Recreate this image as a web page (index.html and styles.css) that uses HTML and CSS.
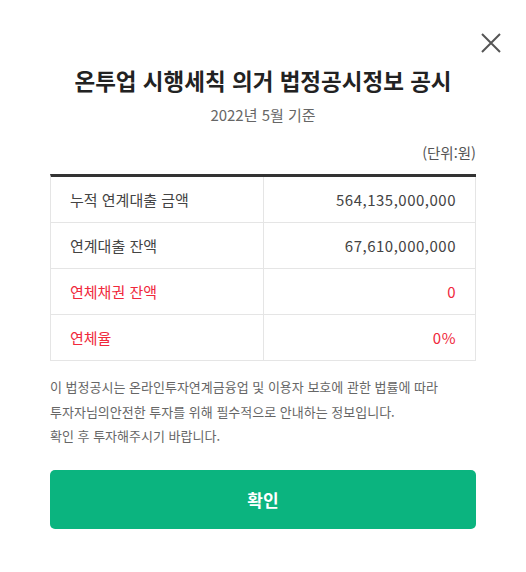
FILE: index.html
```html
<!DOCTYPE html>
<html lang="ko">
<head>
<meta charset="utf-8">
<link rel="stylesheet" href="styles.css">
</head>
<body>
<div class="modal">
  <button class="close" aria-label="닫기">
    <svg width="20" height="20" viewBox="0 0 20 20"><path d="M1 1L19 19M19 1L1 19" stroke="#555" stroke-width="2" fill="none"/></svg>
  </button>
  <h1 class="title">온투업 시행세칙 의거 법정공시정보 공시</h1>
  <p class="sub">2022년 5월 기준</p>
  <p class="unit">(단위:원)</p>
  <div class="grid">
    <div class="cell label">누적 연계대출 금액</div>
    <div class="cell value">564,135,000,000</div>
    <div class="cell label">연계대출 잔액</div>
    <div class="cell value">67,610,000,000</div>
    <div class="cell label red">연체채권 잔액</div>
    <div class="cell value red">0</div>
    <div class="cell label red">연체율</div>
    <div class="cell value red">0%</div>
  </div>
  <p class="notice">이 법정공시는 온라인투자연계금융업 및 이용자 보호에 관한 법률에 따라<br>투자자님의안전한 투자를 위해 필수적으로 안내하는 정보입니다.<br>확인 후 투자해주시기 바랍니다.</p>
  <button class="confirm">확인</button>
</div>
</body>
</html>
```
FILE: styles.css
```css
* { box-sizing: border-box; }
html, body { margin: 0; padding: 0; background: #fff; }
body {
  font-family: "Noto Sans CJK KR", "Noto Sans", sans-serif;
  color: #333;
}
.modal {
  position: relative;
  width: 526px;
  padding: 64px 50px 0;
}
.close {
  position: absolute;
  top: 33px;
  left: 481px;
  width: 20px;
  height: 20px;
  padding: 0;
  border: 0;
  background: none;
  display: block;
}
.close svg { display: block; }
.title {
  margin: 0;
  font-size: 22.5px;
  line-height: 32px;
  font-weight: 700;
  text-align: center;
  color: #222;
}
.sub {
  margin: 9px 0 0;
  font-size: 15px;
  line-height: 20px;
  text-align: center;
  color: #666;
}
.unit {
  margin: 18px 0 0;
  font-size: 14.5px;
  line-height: 20px;
  text-align: right;
  color: #555;
}
.grid {
  margin-top: 11px;
  display: grid;
  grid-template-columns: 213px 1fr;
  border-top: 3px solid #333;
  border-left: 1px solid #e5e5e5;
}
.cell {
  height: 46px;
  border-right: 1px solid #e5e5e5;
  border-bottom: 1px solid #e5e5e5;
  font-size: 15px;
  line-height: 45px;
  color: #444;
}
.label { padding-left: 19px; }
.value { padding-right: 19px; text-align: right; letter-spacing: 0.5px; }
.red { color: #f0283c; }
.notice {
  margin: 14px 0 0;
  font-size: 13px;
  line-height: 24.5px;
  color: #666;
}
.confirm {
  display: block;
  width: 100%;
  height: 59px;
  margin-top: 21px;
  border: 0;
  border-radius: 5px;
  background: #0bb47f;
  color: #fff;
  font-family: inherit;
  font-size: 17px;
  font-weight: 700;
}
```
